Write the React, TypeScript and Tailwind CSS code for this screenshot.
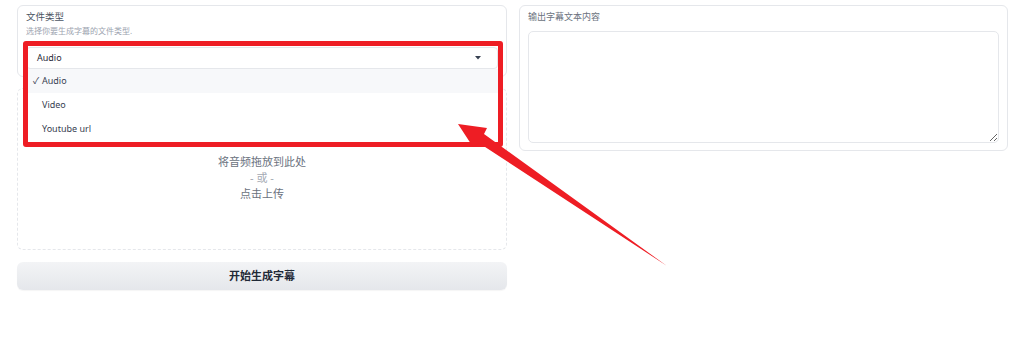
import React from 'react';

const font = "font-['Noto_Sans','Noto_Sans_CJK_SC',sans-serif]";

function FileTypeCard() {
  return (
    <div className="relative h-[72px] rounded-md border border-[#e5e7eb] bg-white px-[8px] pt-[5px]">
      <div className="text-[9.5px] leading-[12px] text-[#4b5563]">文件类型</div>
      <div className="mt-[3px] text-[8px] leading-[10px] text-[#9ca3af]">选择你要生成字幕的文件类型.</div>
      {/* Dropdown */}
      <div className="relative mt-[11px]">
        <div className="flex h-[22px] items-center justify-between rounded-[4px] border border-[#e5e7eb] bg-white pl-[10px] pr-[16px]">
          <span className="text-[9px] text-[#1f2937]">Audio</span>
          <svg width="6" height="4" viewBox="0 0 6 4">
            <path d="M0 0 L6 0 L3 3.5 Z" fill="#374151" />
          </svg>
        </div>
        <div className="absolute left-0 right-0 top-full z-10 bg-white">
          {[
            { label: 'Audio', on: true },
            { label: 'Video', on: false },
            { label: 'Youtube url', on: false },
          ].map((o) => (
            <div
              key={o.label}
              className={`flex h-[24px] items-center pl-[7px] text-[9px] text-[#374151] ${o.on ? 'bg-[#f7f8fa]' : 'bg-white'}`}
            >
              <span className="w-[9px]">{o.on ? '✓' : ''}</span>
              <span>{o.label}</span>
            </div>
          ))}
        </div>
      </div>
    </div>
  );
}

export default function App() {
  return (
    <div className={`relative h-[348px] w-[1024px] overflow-hidden bg-white ${font}`}>
      <div className="flex gap-3 pl-[17px] pr-4 pt-[5px]">
        {/* Left column */}
        <div className="flex w-[490px] flex-col">
          <FileTypeCard />

          {/* Upload area */}
          <div className="mt-[11px] flex h-[162px] flex-col items-center rounded-md border border-dashed border-[#e5e7eb] pt-[65px] text-[11px] leading-[16px]">
            <div className="text-[#6b7280]">将音频拖放到此处</div>
            <div className="text-[#a3a9b3]">- 或 -</div>
            <div className="text-[#6b7280]">点击上传</div>
          </div>

          {/* Submit */}
          <button className="mt-3 h-[28px] rounded-md bg-gradient-to-b from-[#f3f4f6] to-[#e5e7eb] text-[11px] font-bold text-[#1f2937] shadow-[0_1px_1px_rgba(0,0,0,0.04)]">
            开始生成字幕
          </button>
        </div>

        {/* Right column */}
        <div className="h-[146px] w-[489px] rounded-md border border-[#e5e7eb] bg-white px-[8px] pt-[5px]">
          <div className="text-[9px] leading-[12px] text-[#6b7280]">输出字幕文本内容</div>
          <textarea className="mt-[8px] block h-[112px] w-full resize-y rounded-[5px] border border-[#e5e7eb] bg-white outline-none" />
        </div>
      </div>

      {/* Annotation: red box */}
      <div className="absolute left-[23px] top-[41px] z-20 h-[106px] w-[480px] rounded-[3px] border-[5px] border-[#ee1d24]" />

      {/* Annotation: arrow */}
      <svg className="pointer-events-none absolute left-0 top-0 z-20" width="1024" height="348">
        <polygon
          points="458,124 487,128 484,134 667,266 479,143 473,147"
          fill="#ee1d24"
        />
      </svg>
    </div>
  );
}
